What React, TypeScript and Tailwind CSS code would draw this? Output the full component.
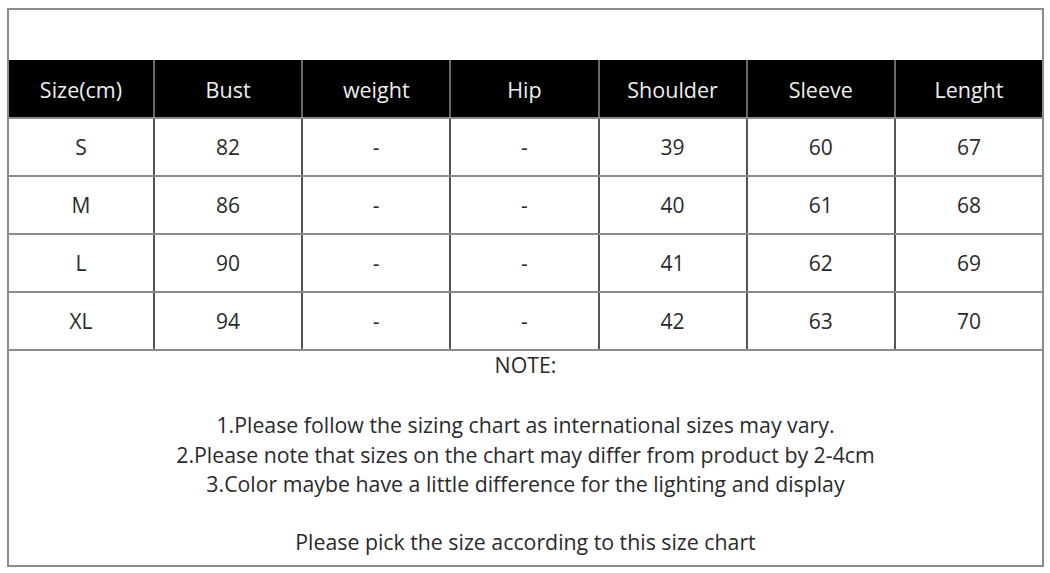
import * as React from "react";

const HEADERS = ["Size(cm)", "Bust", "weight", "Hip", "Shoulder", "Sleeve", "Lenght"];

const ROWS = [
  ["S", "82", "-", "-", "39", "60", "67"],
  ["M", "86", "-", "-", "40", "61", "68"],
  ["L", "90", "-", "-", "41", "62", "69"],
  ["XL", "94", "-", "-", "42", "63", "70"],
];

const NOTES = [
  "1.Please follow the sizing chart as international sizes may vary.",
  "2.Please note that sizes on the chart may differ from product by 2-4cm",
  "3.Color maybe have a little difference for the lighting and display",
];

export default function App() {
  return (
    <div
      className="w-[1050px] h-[573px] bg-white pl-[7px] pt-[8px]"
      style={{ fontFamily: '"Open Sans", "Noto Sans", sans-serif' }}
    >
      <div className="w-[1037px] h-[559px] border-2 border-[#8c8c8c] flex flex-col">
        {/* empty title band */}
        <div className="h-[50px]" />

        {/* header */}
        <div className="grid grid-cols-[144px_repeat(6,1fr)] h-[57px] bg-black">
          {HEADERS.map((h, i) => (
            <div
              key={h}
              className={`flex items-center justify-center pt-[3px] text-[21.5px] text-[#eeeeee] ${
                i > 0 ? "border-l-2 border-[#6a6a6a]" : ""
              }`}
            >
              {h}
            </div>
          ))}
        </div>

        {/* body rows */}
        {ROWS.map((row) => (
          <div
            key={row[0]}
            className="grid grid-cols-[144px_repeat(6,1fr)] h-[58px] border-t-2 border-[#8c8c8c]"
          >
            {row.map((cell, i) => (
              <div
                key={i}
                className={`flex items-center justify-center pt-[2px] text-[21px] text-[#2a2a2a] ${
                  i > 0 ? "border-l-2 border-[#555]" : ""
                }`}
              >
                {cell}
              </div>
            ))}
          </div>
        ))}

        {/* notes */}
        <div className="border-t-2 border-[#8c8c8c] flex-1 flex flex-col items-center text-[21.3px] text-[#2a2a2a]">
          <div className="leading-[28px]">NOTE:</div>
          <div className="mt-[31px] flex flex-col items-center">
            {NOTES.map((n) => (
              <div key={n} className="leading-[29.5px]">
                {n}
              </div>
            ))}
          </div>
          <div className="leading-[30px] mt-[28px]">
            Please pick the size according to this size chart
          </div>
        </div>
      </div>
    </div>
  );
}
